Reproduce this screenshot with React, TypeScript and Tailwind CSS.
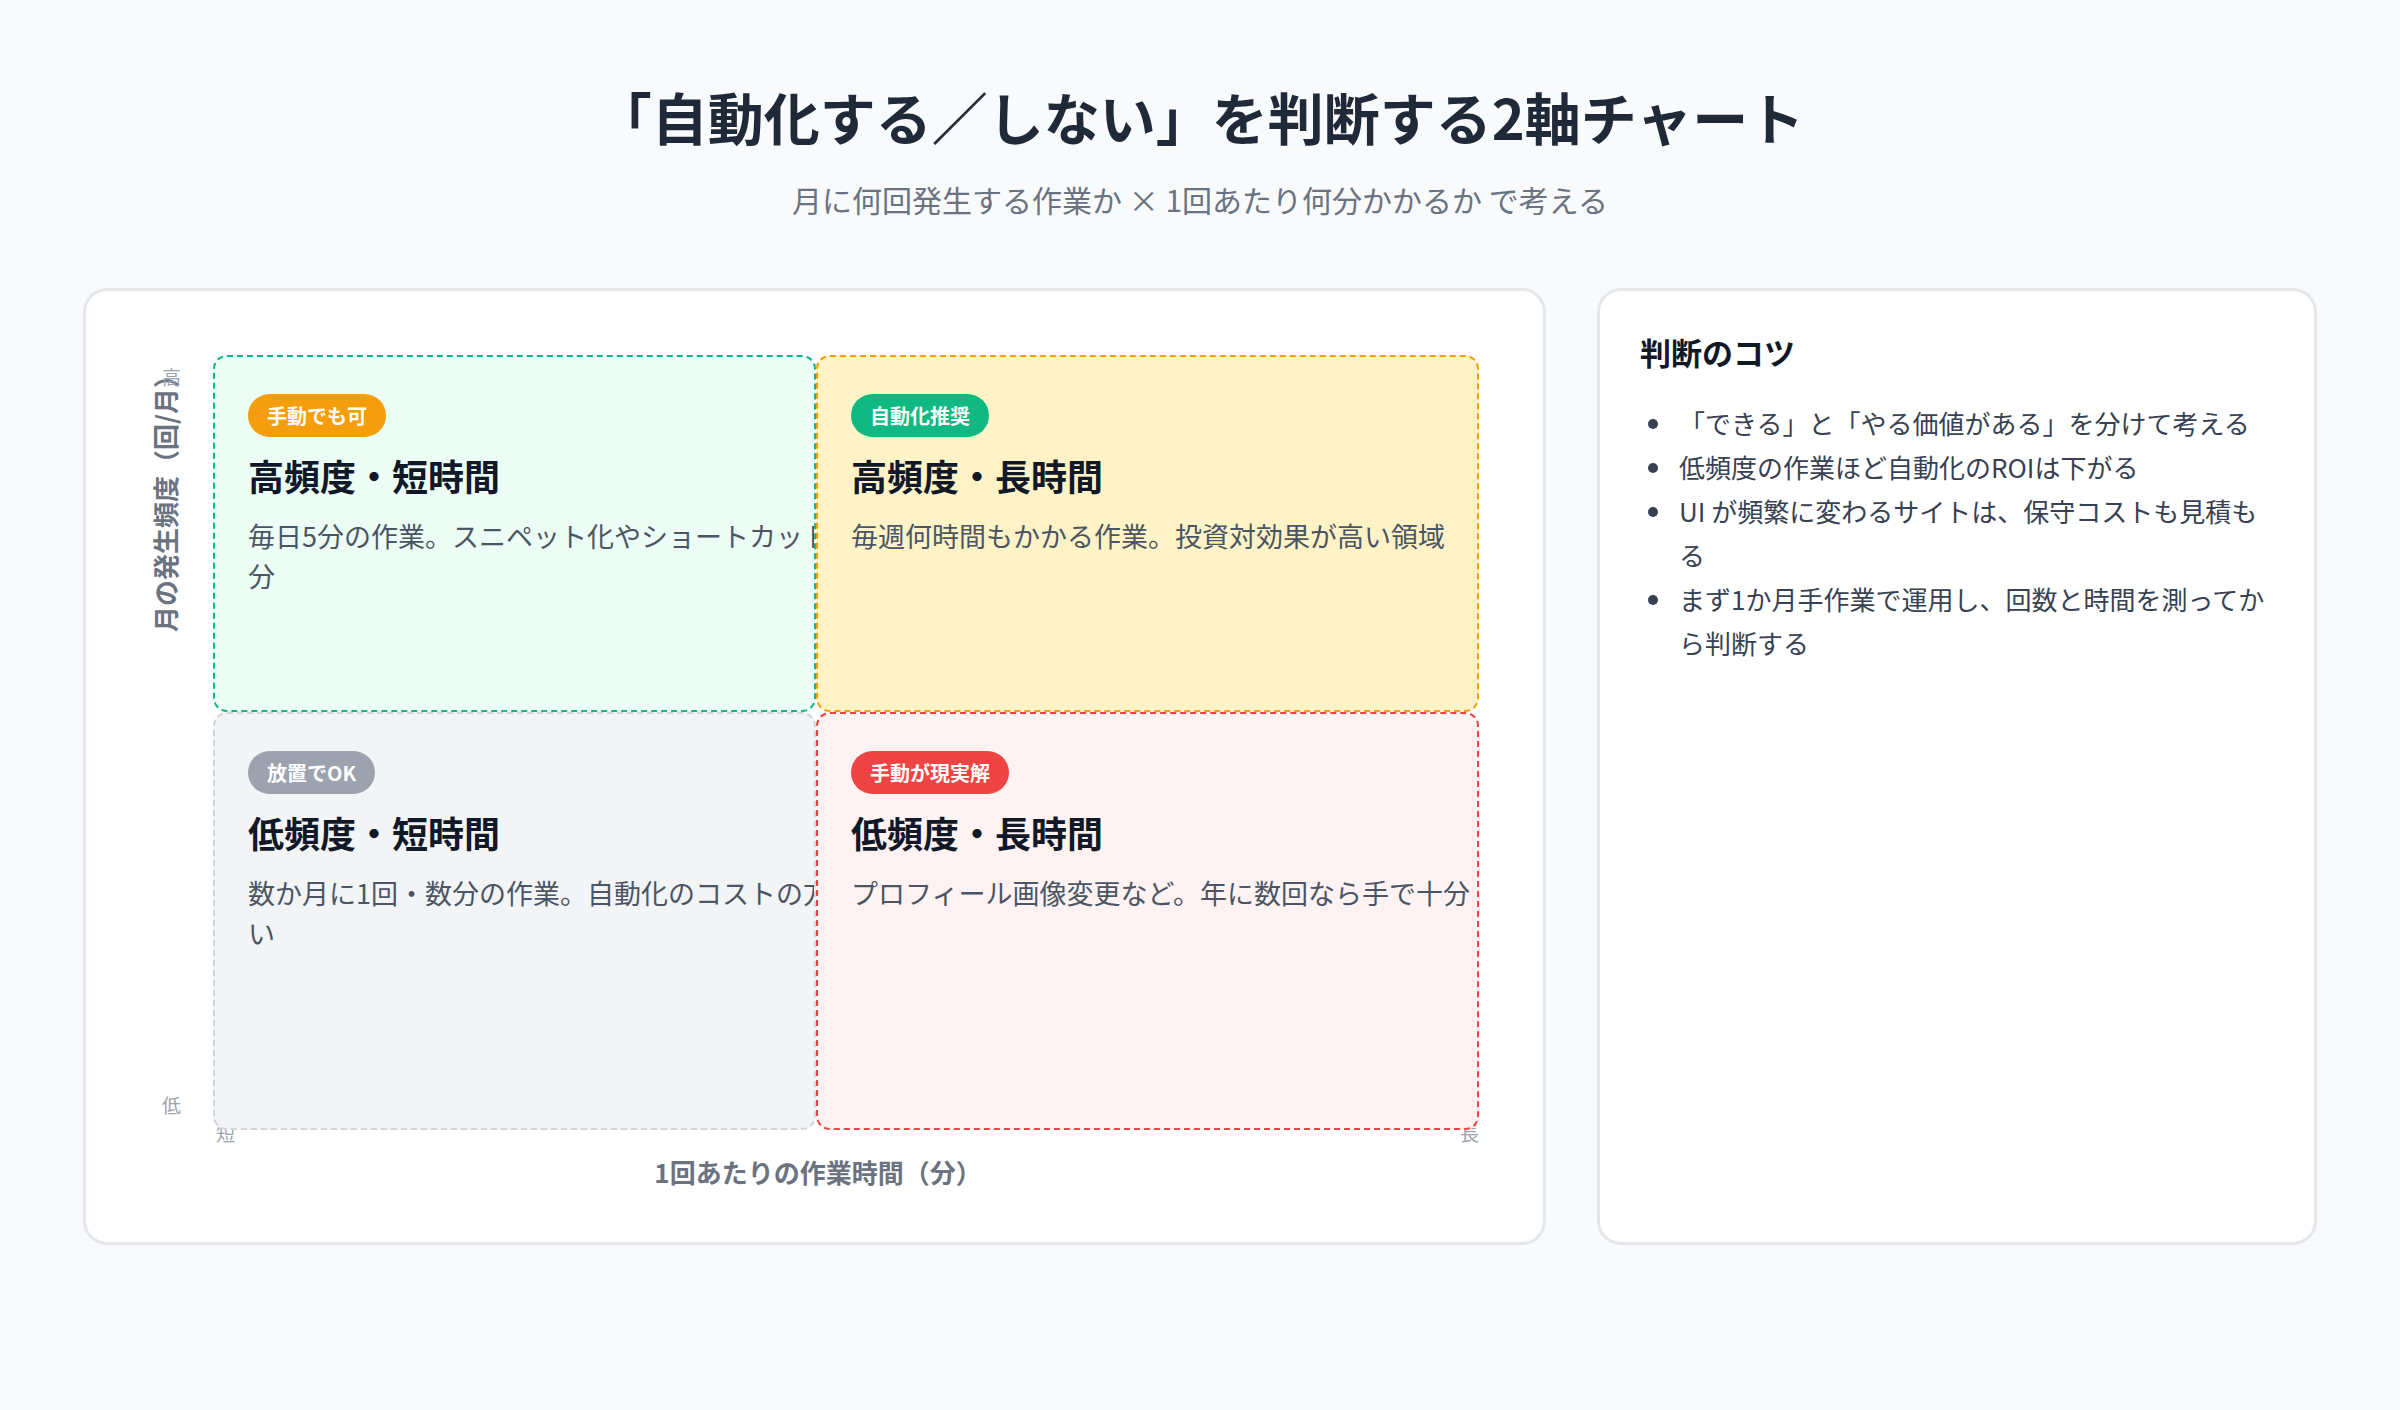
import React from 'react';

const font = { fontFamily: '"Noto Sans CJK JP", "Noto Sans", sans-serif' };

type Quad = { badge: string; badgeCls: string; title: string; body: string; cls: string; wide?: boolean };

const quads: Quad[] = [
  { badge: '手動でも可', badgeCls: 'bg-[#f59e0b]', title: '高頻度・短時間', body: '毎日5分の作業。スニペット化やショートカットで十分', cls: 'bg-[#ebfdf4] border-[#10b981]', wide: true },
  { badge: '自動化推奨', badgeCls: 'bg-[#10b981]', title: '高頻度・長時間', body: '毎週何時間もかかる作業。投資対効果が高い領域', cls: 'bg-[#fef3c7] border-[#f59e0b]' },
  { badge: '放置でOK', badgeCls: 'bg-[#9ca3af]', title: '低頻度・短時間', body: '数か月に1回・数分の作業。自動化のコストの方が高い', cls: 'bg-[#f3f4f6] border-[#d1d5db]', wide: true },
  { badge: '手動が現実解', badgeCls: 'bg-[#ef4444]', title: '低頻度・長時間', body: 'プロフィール画像変更など。年に数回なら手で十分', cls: 'bg-[#fef2f2] border-[#ef4444]' },
];

const tips = [
  '「できる」と「やる価値がある」を分けて考える',
  '低頻度の作業ほど自動化のROIは下がる',
  'UI が頻繁に変わるサイトは、保守コストも見積もる',
  'まず1か月手作業で運用し、回数と時間を測ってから判断する',
];

export default function App() {
  return (
    <div style={font} className="min-h-[1410px] bg-[#f8fafc] px-[83px] pt-[76px] text-[#1f2937]">
      <h1 className="text-center text-[56px] font-bold leading-[80px] text-[#1f2937]">「自動化する／しない」を判断する2軸チャート</h1>
      <p className="mt-[21px] text-center text-[30px] text-[#6b7280]">月に何回発生する作業か × 1回あたり何分かかるか で考える</p>

      <div className="mt-[66px] flex gap-[51px]">
        <div className="relative h-[957px] w-[1463px] shrink-0 rounded-[24px] border-[3px] border-[#e5e7eb] bg-white">
          <div className="absolute left-[8px] top-[196px] w-[260px] -translate-x-[0px] -rotate-90 whitespace-nowrap text-center text-[26px] font-bold leading-[30px] text-[#6b7280]" style={{ marginLeft: -59 }}>
            月の発生頻度（回/月）
          </div>
          <span className="absolute left-[76px] top-[72px] text-[19px] text-[#9ca3af]">高</span>
          <span className="absolute left-[76px] top-[800px] text-[19px] text-[#9ca3af]">低</span>
          <span className="absolute left-[130px] top-[828px] text-[19px] text-[#9ca3af]">短</span>
          <span className="absolute left-[1374px] top-[828px] text-[19px] text-[#9ca3af]">長</span>

          <div className="relative z-10 ml-[127px] mt-[64px] grid w-[1266px] grid-cols-[603px_663px] grid-rows-[357px_418px]">
            {quads.map((q) => (
              <div key={q.title} className={`overflow-hidden rounded-[14px] border-2 border-dashed px-[33px] pt-[37px] ${q.cls}`}>
                <span className={`inline-block rounded-full px-[19px] py-[6px] text-[20px] font-bold leading-[31px] text-white ${q.badgeCls}`}>{q.badge}</span>
                <h2 className="mt-[13px] text-[36px] font-bold leading-[50px] text-[#111827]">{q.title}</h2>
                <p className={`mt-[16px] text-[27px] leading-[40px] text-[#4b5563] ${q.wide ? 'w-[650px]' : 'whitespace-nowrap'}`}>{q.body}</p>
              </div>
            ))}
          </div>
          <p className="mt-[22px] ml-[127px] text-center text-[26px] font-bold text-[#6b7280]" style={{ width: 1210 }}>1回あたりの作業時間（分）</p>
        </div>

        <div className="h-[957px] flex-1 rounded-[24px] border-[3px] border-[#e5e7eb] bg-white px-[40px] pt-[38px]">
          <h3 className="text-[31px] font-bold leading-[46px] text-[#111827]">判断のコツ</h3>
          <ul className="mt-[26px] list-disc pl-[35px] text-[26px] leading-[44px] text-[#374151] marker:text-[#374151]">
            {tips.map((t) => (
              <li key={t} className="pl-[4px]">{t}</li>
            ))}
          </ul>
        </div>
      </div>
    </div>
  );
}
